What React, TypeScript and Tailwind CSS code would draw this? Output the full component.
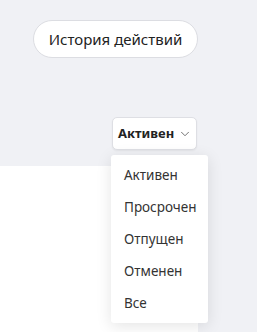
import { ChevronDown } from 'lucide-react';

const options = ['Активен', 'Просрочен', 'Отпущен', 'Отменен', 'Все'];

export default function App() {
  return (
    <main
      className="w-[257px] h-[332px] overflow-hidden bg-[#f0f1f5] text-[#222]"
      style={{ fontFamily: '"Noto Sans", "Open Sans", sans-serif' }}
    >
      <div className="w-[198px] h-full flex flex-col">
        <div className="flex justify-end pt-[20px]">
          <button className="h-[38px] w-[165px] rounded-full bg-white border border-[#dcdde2] text-[15px] text-[#222] flex items-center justify-center">
            История действий
          </button>
        </div>

        <div className="flex justify-end mt-[59px] pr-[1px]">
          <div className="relative">
            <button className="h-[33px] w-[85px] rounded-[5px] bg-white border border-[#dedfe4] shadow-[0_1px_2px_rgba(0,0,0,0.06)] flex items-center pl-[5px] pr-[4px] justify-between">
              <span className="text-[13px] font-bold text-[#222]">Активен</span>
              <ChevronDown size={14} strokeWidth={1.4} className="text-[#555]" />
            </button>

            <ul className="absolute left-[-1px] top-[38px] w-[97px] h-[168px] bg-white rounded-[3px] shadow-[0_3px_16px_rgba(0,0,0,0.11)] py-[4px] z-10">
              {options.map((o) => (
                <li key={o} className="h-[32px] flex items-center pl-[13px] text-[13.5px] text-[#333]">
                  {o}
                </li>
              ))}
            </ul>
          </div>
        </div>

        <div className="flex-1 bg-white mt-[16px]"></div>
      </div>
    </main>
  );
}
